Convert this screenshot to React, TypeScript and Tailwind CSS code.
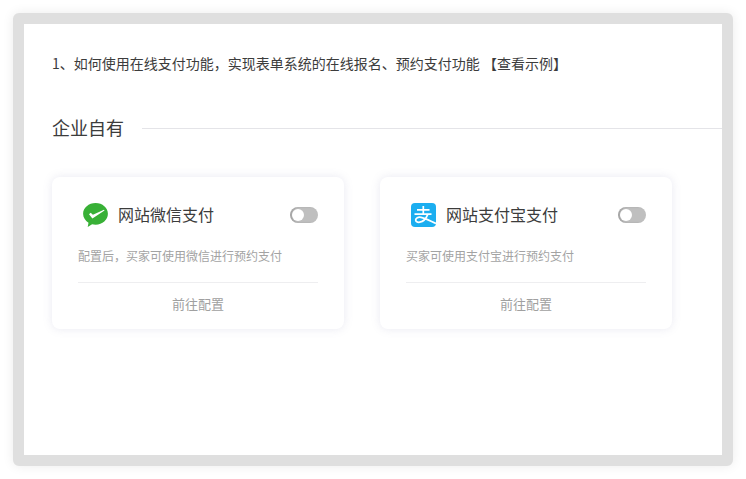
const fontStack = "font-['Microsoft_YaHei','Noto_Sans_CJK_SC',sans-serif]"

function WechatIcon() {
  return (
    <svg width="25" height="24" viewBox="0 0 25 24" className="shrink-0">
      <path
        d="M12.6 0C5.7 0 .1 4.8.1 10.8c0 3.7 2.1 6.9 5.4 8.9L4.7 23.9l4.4-2.7c1.1.3 2.3.5 3.5.5 6.9 0 12.3-4.9 12.3-10.9S19.5 0 12.6 0z"
        fill="#38b036"
      />
      <path d="M6 11.2l1.7-1.4 2.2 1.9L21 6.8l.5.7L9.4 15.4z" fill="#fff" />
    </svg>
  )
}

function AlipayIcon() {
  return (
    <svg width="25" height="24" viewBox="0 0 25 24" className="shrink-0">
      <rect x="0" y="0" width="25" height="24" rx="4" fill="#1caef0" />
      <path d="M6 6.8h12.5M12.3 3v8.2M3.5 11.2h17" stroke="#fff" strokeWidth="1.7" fill="none" />
      <path
        d="M16.8 11.4c-1.6 4-4.4 7.2-8 7.8-2.6.4-4.2-.6-4.1-2.3.1-1.9 2.4-3.1 5.2-2.6 4.2.7 9.7 3.8 15.1 6.2"
        stroke="#fff"
        strokeWidth="1.7"
        fill="none"
      />
    </svg>
  )
}

function Toggle() {
  return (
    <div className="mt-[1px] flex h-4 w-7 items-center rounded-full bg-[#bfbfbf] pl-0.5 shadow-[inset_2px_0_2px_rgba(0,0,0,0.15)]">
      <div className="h-3 w-3 rounded-full bg-white" />
    </div>
  )
}

function PayCard({ icon, title, desc }: { icon: React.ReactNode; title: string; desc: string }) {
  return (
    <div className="h-[152px] w-[292px] shrink-0 rounded-lg bg-white px-[26px] shadow-[0_0_10px_rgba(120,120,170,0.16)]">
      <div className="flex h-[70px] items-center justify-between pt-[5px]">
        <div className="flex items-center gap-[10px] pl-[5px]">
          {icon}
          <span className="-mt-[2px] text-base leading-6 text-[#3c3c3c]">{title}</span>
        </div>
        <Toggle />
      </div>
      <p className="text-xs leading-[18px] text-[#a3a3a3]">{desc}</p>
      <div className="mt-[17px] border-t border-[#eeeef0] pt-[11px] text-center text-[13px] leading-5 text-[#a0a0a0]">
        前往配置
      </div>
    </div>
  )
}

export default function App() {
  return (
    <div className={`h-[479px] w-[746px] overflow-hidden bg-white p-[13px] ${fontStack}`}>
      <div className="h-[453px] w-[720px] rounded-[6px] border-[11px] border-[#dfdfdf] bg-white shadow-[0_0_12px_rgba(0,0,0,0.08)]">
        <p className="pl-7 pt-[29px] text-sm leading-5 text-[#3c3c3c]">
          1、如何使用在线支付功能，实现表单系统的在线报名、预约支付功能 【查看示例】
        </p>
        <div className="mt-[40px] flex items-center pl-7">
          <h2 className="pb-[2px] text-lg leading-7 font-normal text-[#3c3c3c]">企业自有</h2>
          <div className="ml-[18px] h-px flex-1 bg-[#e4e4e8]" />
        </div>
        <div className="mt-[34px] flex gap-9 pl-7">
          <PayCard icon={<WechatIcon />} title="网站微信支付" desc="配置后，买家可使用微信进行预约支付" />
          <PayCard icon={<AlipayIcon />} title="网站支付宝支付" desc="买家可使用支付宝进行预约支付" />
        </div>
      </div>
    </div>
  )
}
